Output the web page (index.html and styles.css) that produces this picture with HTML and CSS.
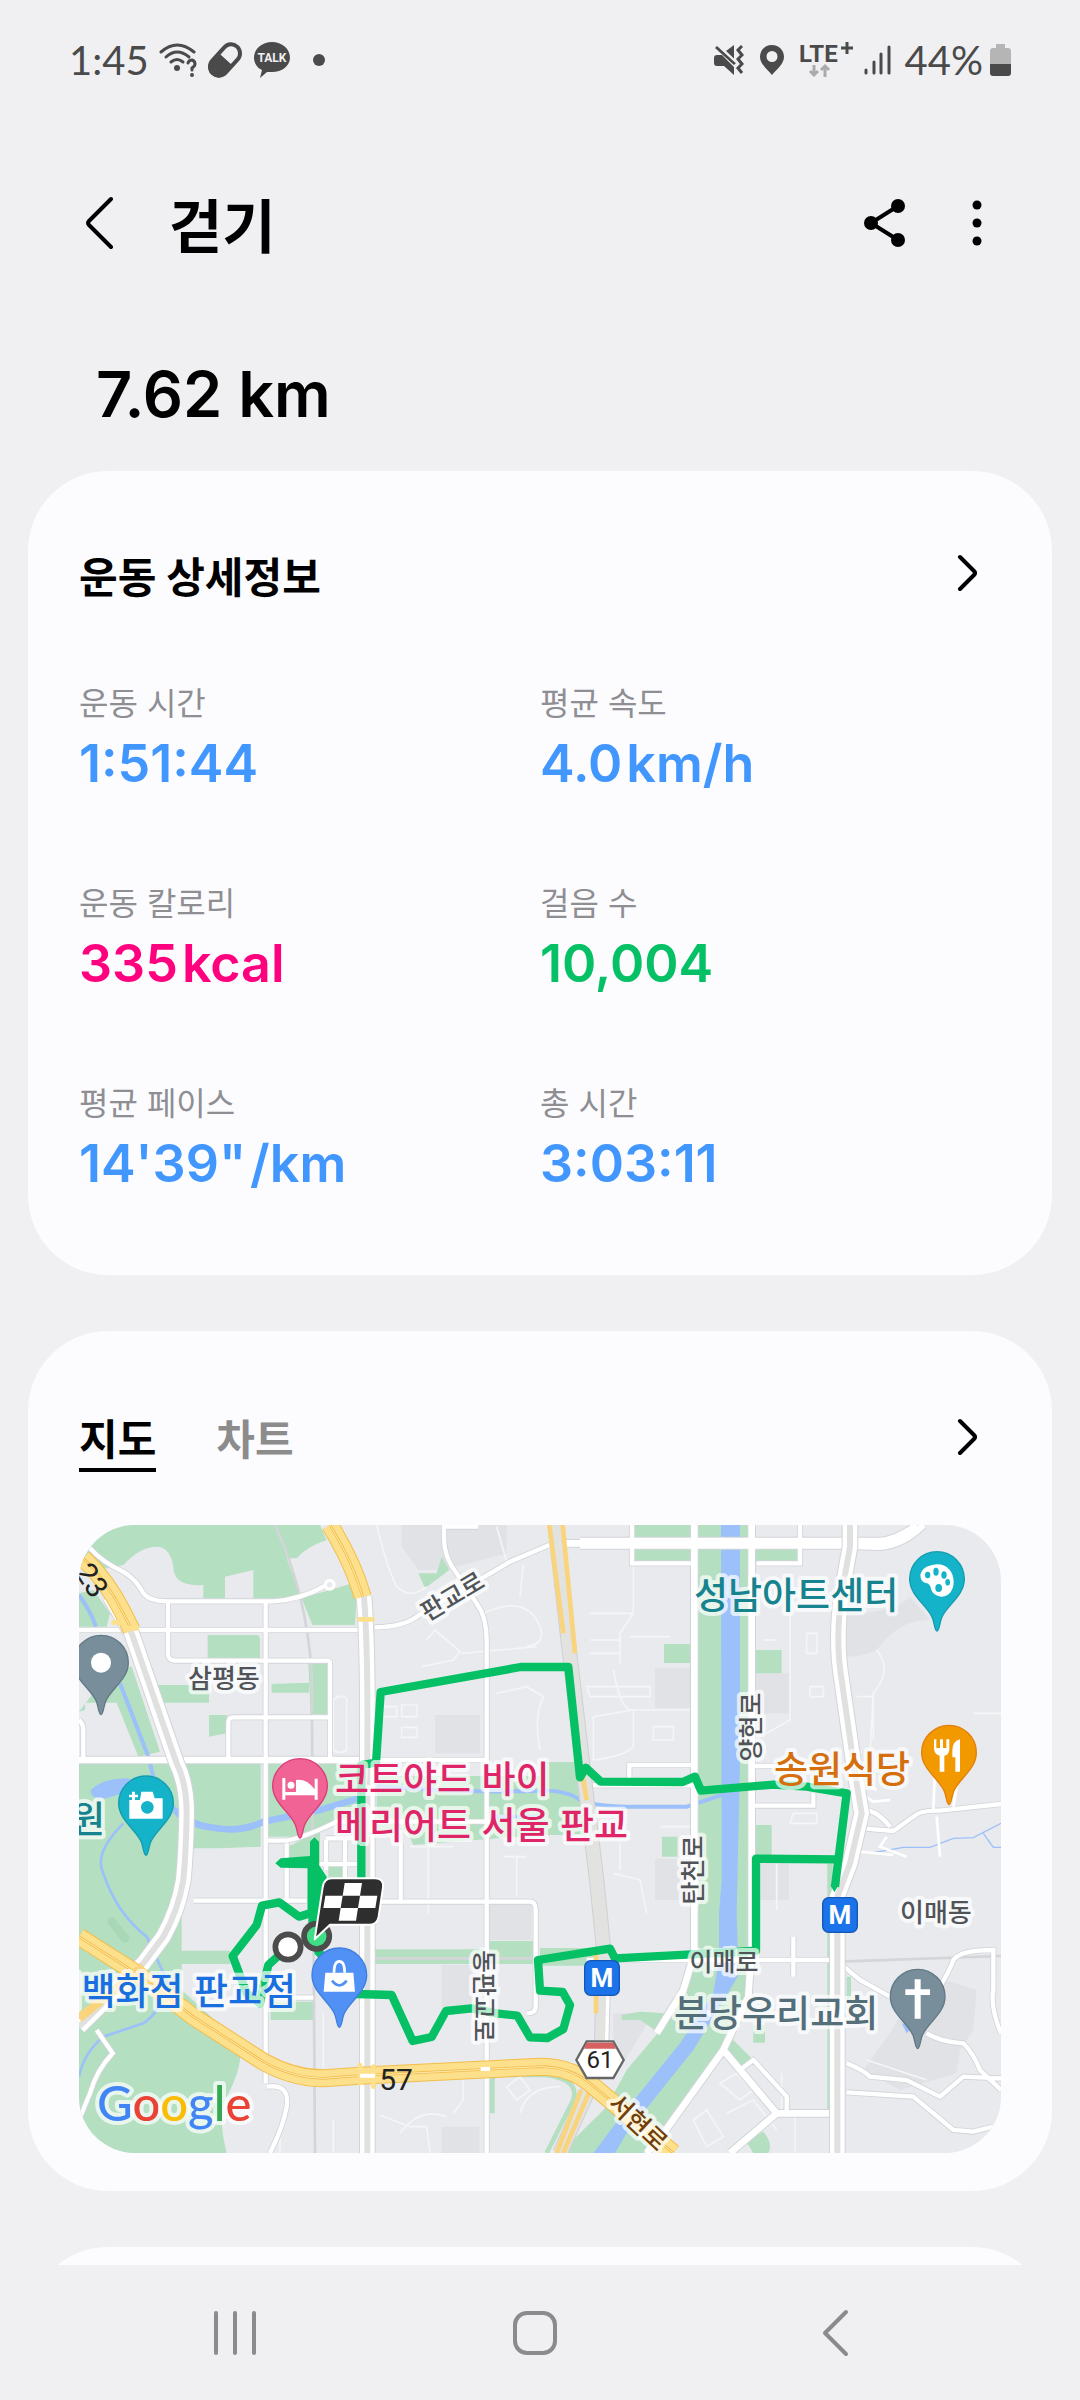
FILE: index.html
```html
<!DOCTYPE html>
<html lang="ko">
<head>
  <meta charset="UTF-8">
  <meta name="viewport" content="width=device-width, initial-scale=1.0">
  <title>걷기</title>
  <link rel="stylesheet" href="styles.css">
</head>
<body>
  <div class="statusbar">
    <div class="status-left">
      <span class="clock">1:45</span>
      <svg class="icon" width="38" height="36" viewBox="0 0 38 36">
        <g fill="none" stroke="#4a4a4a" stroke-width="3" stroke-linecap="round">
          <path d="M2 10Q18 -4 35 10"/>
          <path d="M7 15Q18 5 30 15"/>
          <path d="M12 20Q18 15 24 20"/>
          <path d="M29 21Q30 18 33 18Q36 19 36 22Q36 24 33 26V28"/>
        </g>
        <circle cx="18" cy="26" r="3" fill="#4a4a4a"/>
        <circle cx="33" cy="33" r="2" fill="#4a4a4a"/>
      </svg>
      <svg class="icon" width="36" height="36" viewBox="0 0 36 36">
        <g transform="rotate(42 18 18)">
          <rect x="9" y="0" width="18" height="36" rx="9" fill="none" stroke="#4a4a4a" stroke-width="4"/>
          <path d="M8 17H28V28A10 10 0 0 1 8 28Z" fill="#4a4a4a"/>
        </g>
      </svg>
      <svg class="icon" width="38" height="36" viewBox="0 0 38 36">
        <path d="M19 0C29 0 37 7 37 15.500S29 30 19 30L14 30L7 36L9 28C4 26 1 21 1 15.500C1 7 9 0 19 0Z" fill="#4a4a4a"/>
        <text class="talk" x="19" y="20">TALK</text>
      </svg>
      <span class="dot"></span>
    </div>
    <div class="status-right">
      <svg class="icon" width="30" height="32" viewBox="0 0 30 32">
        <path d="M3 11H8L20 23V31L10 22H3Q0 22 0 19V14Q0 11 3 11ZM12 7L20 1V15Z" fill="#4a4a4a"/>
        <path d="M2 3L21 20" stroke="#4a4a4a" stroke-width="3"/>
        <path d="M7 4L22 18" stroke="#f0f0f3" stroke-width="2"/>
        <path d="M28 2L24 6L28 11L24 15L28 20L24 24L28 29" fill="none" stroke="#4a4a4a" stroke-width="3"/>
      </svg>
      <svg class="icon" width="24" height="32" viewBox="0 0 24 32">
        <path fill-rule="evenodd" d="M12 1C19 1 24 6 24 13C24 20 16 26 12 31C8 26 0 20 0 13C0 6 5 1 12 1ZM12 7A5 5 0 1 0 12 18A5 5 0 1 0 12 7Z" fill="#4a4a4a"/>
      </svg>
      <svg class="icon lte-icon" width="54" height="38" viewBox="0 0 54 38">
        <text class="lte" x="-1" y="21">LTE</text>
        <path d="M47 1V13M41 7H53" stroke="#4a4a4a" stroke-width="3"/>
        <path d="M14 24V35M10 30L14 34L18 30M25 36V25M21 29L25 25L29 29" fill="none" stroke="#aaa" stroke-width="3"/>
      </svg>
      <svg class="icon" width="27" height="32" viewBox="0 0 27 32">
        <path d="M2 26V29M10 18V29M17 10V29M25 3V29" fill="none" stroke="#4a4a4a" stroke-width="3" stroke-linecap="round"/>
      </svg>
      <span class="battery-text">44%</span>
      <svg class="icon" width="21" height="32" viewBox="0 0 21 32">
        <path d="M6 0H15V4H18Q21 4 21 7V20H0V7Q0 4 3 4H6Z" fill="#b5b5b5"/>
        <path d="M0 20H21V29Q21 32 18 32H3Q0 32 0 29Z" fill="#4a4a4a"/>
      </svg>
    </div>
  </div>

  <main class="content">
    <header class="appbar">
      <button class="icon-btn back" type="button" aria-label="뒤로">
        <svg width="28" height="54" viewBox="0 0 28 54"><path d="M26 3L4 25Q2 27 4 29L26 51" fill="none" stroke="#000" stroke-width="4" stroke-linecap="round"/></svg>
      </button>
      <h1>걷기</h1>
      <button class="icon-btn share" type="button" aria-label="공유">
        <svg width="42" height="50" viewBox="0 0 42 50"><path d="M34 8L7 25L34 42" fill="none" stroke="#000" stroke-width="4"/><circle cx="34" cy="8" r="7"/><circle cx="7" cy="25" r="7"/><circle cx="34" cy="42" r="7"/></svg>
      </button>
      <button class="icon-btn more" type="button" aria-label="더보기">
        <svg width="10" height="48" viewBox="0 0 10 48"><circle cx="5" cy="6" r="4.500"/><circle cx="5" cy="24" r="4.500"/><circle cx="5" cy="42" r="4.500"/></svg>
      </button>
    </header>

    <p class="distance">7.62 km</p>

    <section class="card details">
      <div class="card-head">
        <h2>운동 상세정보</h2>
        <a class="chevron" href="#details" aria-label="운동 상세정보 보기">
          <svg width="20" height="38" viewBox="0 0 20 38"><path d="M3 3L17 17Q19 19 17 21L3 35" fill="none" stroke="#000" stroke-width="4" stroke-linecap="round"/></svg>
        </a>
      </div>
      <dl class="stats">
        <div><dt>운동 시간</dt><dd class="blue">1:51:44</dd></div>
        <div><dt>평균 속도</dt><dd class="blue">4.0<span class="unit">km/h</span></dd></div>
        <div><dt>운동 칼로리</dt><dd class="pink">335<span class="unit">kcal</span></dd></div>
        <div><dt>걸음 수</dt><dd class="green">10,004</dd></div>
        <div><dt>평균 페이스</dt><dd class="blue">14'39"<span class="unit">/km</span></dd></div>
        <div><dt>총 시간</dt><dd class="blue">3:03:11</dd></div>
      </dl>
    </section>

    <section class="card map-card">
      <div class="card-head">
        <div class="tabs">
          <button class="tab active" type="button">지도</button>
          <button class="tab" type="button">차트</button>
        </div>
        <a class="chevron" href="#map" aria-label="지도 보기">
          <svg width="20" height="38" viewBox="0 0 20 38"><path d="M3 3L17 17Q19 19 17 21L3 35" fill="none" stroke="#000" stroke-width="4" stroke-linecap="round"/></svg>
        </a>
      </div>

      <div class="map">
        <svg class="map-art" viewBox="57 435 2766 1884">
          <defs>
            <path id="pin" d="M0 156C-7 156-8 130-14 116C-30 78-82 50-82 0A82 82 0 0 1 82 0C82 50 30 78 14 116C8 130 7 156 0 156Z"/>
            <path id="wide" d="M1903 435V1720L1870 1830L1790 1960M2075 435V1700L2065 1850L1990 2010L1810 2260L1760 2319M1990 2010L2150 2200L2010 2319M2150 2200H2320M57 1140H920M1500 490H1560M1560 483H2340L2460 483Q2510 480 2570 435M1560 496H2340L2460 500Q2530 495 2590 435"/>
            <path id="narrow" d="M85 500Q130 550 190 575Q230 600 250 640Q270 664 320 664H640Q720 660 800 615M57 750H895M324 664V820Q324 842 345 842H810M617 664V2110M810 842V1140M505 1140V1030Q505 1012 520 1012H810M945 742Q1030 740 1070 710L1350 545L1475 492M1152 435V470Q1150 530 1190 580L1250 670Q1280 710 1280 780V2319M950 1140H1280M1150 440H1255M57 1020Q70 1030 70 1050V1140M400 1562H740M617 1382H680Q740 1370 830 1325H1290M680 1390V1562M798 1380V1470M855 1380V1530M780 1452H895M798 1375H880M1022 1390V1565M940 1565H1410Q1427 1565 1427 1590V1880Q1427 1900 1400 1900M620 1853H760M110 1950L158 2020Q110 2070 90 2140L57 2220M1580 1740H2310M2200 1670V1790M2080 1277H2260V1240M2080 1158H2330M1708 1220V1155H1900M2220 435V550H2090M1716 435V550H1895M1585 1216H1900M2380 1343L2500 1353L2560 1310Q2580 1290 2640 1292L2823 1272M2410 1290Q2450 1290 2490 1340M2340 1750L2400 1800L2490 1850M2600 1960Q2640 1985 2710 1990Q2740 2020 2760 2070L2823 2130M2360 2137L2560 2150L2680 2250L2740 2255L2800 2240M2360 2050Q2410 2070 2430 2090L2540 2100L2640 2150L2710 2090L2823 2095M2640 1820Q2670 1770 2680 1740Q2700 1710 2800 1710V1830Q2790 1880 2823 1960M2040 2070L2080 2040L2180 2150V2190M620 2120Q690 2110 680 2180Q670 2240 630 2319"/>
            <path id="highway" d="M150 650L215 760L350 1150Q380 1210 380 1300Q378 1420 370 1500Q355 1590 310 1670L250 1750L57 1940M912 650Q924 800 922 1100V2319M2370 435V500L2345 640Q2325 780 2345 900L2385 1180L2405 1300L2370 1450L2332 1550V2319"/>
            <path id="trunk" d="M57 1670L230 1780L400 1910L610 2045Q700 2095 790 2095L900 2087L1440 2060Q1530 2060 1590 2110L1840 2319M810 435Q880 550 908 650M70 535Q140 600 190 700L215 750"/>
          </defs>

          <rect x="57" y="435" width="2766" height="1884" fill="#e8eaed"/>

          <!-- blocks -->
          <path fill="#e1e2e6" d="M1025 435H1340V520L1150 570H1075L1025 500ZM1125 1005H1260V1120H1125ZM1785 863H1890V983H1785ZM2088 880H2190V1000H2088ZM1785 1437H1887V1560H1785ZM2100 1450H2187V1560H2100ZM2360 700Q2500 700 2550 650L2610 720Q2520 715 2450 810Q2410 830 2360 830ZM2490 1960L2590 1780L2750 1830L2740 1950L2700 2010L2690 2080L2520 2130L2410 2070ZM1285 1570H1415V1680H1285ZM1145 1755H1240V1880H1145ZM1660 1900H1780L1690 2050H1660ZM1145 2240H1258V2319H1145Z"/>

          <!-- parks -->
          <g fill="#b4dfc1">
            <path d="M57 435H780L800 480Q740 500 710 535H680L725 655H580V570L495 590V655H430V615Q340 620 340 560Q330 500 290 500Q240 500 190 555L110 570L57 520Z"/>
            <path d="M725 655L870 612L890 650L885 735H757ZM443 765H590Q600 765 600 780V835H443ZM270 915H447V968H280ZM635 912L747 908V938H635ZM745 850H803V1002H752ZM447 1005H500V1060L447 1070ZM1075 580H1130L1145 530L1168 570L1095 625Z"/>
            <path d="M57 640L100 630L150 700L140 740H57ZM160 860H215L300 1115L235 1130L170 968H75V990L57 995Z"/>
            <path d="M57 1150H602V1400L480 1405H395L365 1500V1712H510V1752H365V1830L540 1990Q550 2060 500 2150Q470 2200 500 2319H57Z"/>
            <path d="M625 1150H895V1300L700 1370H625ZM950 1188H1440V1146H1570V1365H1440L1060 1395L1040 1350H950ZM945 1708H1285V1683H1420V1752H945ZM632 1865H765V1920H632ZM805 1460H850V1500H805ZM685 1400L780 1350V1450H685Z"/>
            <path d="M1915 435H2065V1700L2060 1850L1990 2000L1830 2210L1750 2319H1500L1640 2180L1700 2070L1810 1940L1880 1810L1915 1700Z"/>
            <path d="M1722 435H1890V472H1722ZM1722 508H1890V545H1722ZM2088 508H2220V545H2088ZM1812 792H1890V849H1812ZM2087 810H2165V880H2087ZM1806 1370H1852V1430H1806ZM2085 1335H2135V1425H2085ZM2302 1450H2318V2190H2302ZM2020 1980L2080 2040L2045 2065L1990 2010ZM2080 1935H2115V1988H2080ZM2360 1790H2373V1870H2360ZM1685 1905L1740 1895L1815 1900L1785 1950L1740 1920H1685ZM2055 2280L2110 2255Q2140 2290 2125 2319H2080ZM1440 1704H1600V1757H1440Z"/>
          </g>
          <path fill="none" stroke="#b4dfc1" stroke-width="14" d="M1297 2200V2100Q1297 2085 1320 2085H1460Q1560 2100 1540 2160L1460 2319"/>
          <path d="M155 1625L195 1675" stroke="#a8d8b5" stroke-width="26" stroke-linecap="round"/>

          <!-- water -->
          <path fill="#9cc0f9" d="M1983 435H2040V1150L2030 1600L2033 1700V1790L1900 2010L1700 2260L1665 2319H1600L1690 2200L1860 1990L1960 1840L1977 1740V1600L1985 1500ZM92 1230Q130 1195 200 1195L270 1210Q220 1230 140 1255Q90 1260 92 1230ZM2525 1930L2560 1940L2540 1960Z"/>
          <g fill="none" stroke="#9cc0f9">
            <path stroke-width="20" d="M345 1290Q380 1330 450 1342Q540 1360 610 1325L780 1290L895 1255"/>
            <path stroke-width="12" d="M57 645Q90 690 108 740M180 910L265 1130L280 1190L345 1290M950 1218Q1200 1240 1440 1232Q1520 1230 1560 1260Q1600 1278 1700 1280H1880L2000 1240M1290 1310H1440"/>
            <path stroke-width="8" d="M190 1330Q100 1420 130 1480Q170 1600 260 1670L320 1800Q310 1890 250 1930L130 1970Q70 2020 57 2090"/>
            <path stroke-width="4" d="M2440 1418L2530 1402H2610L2680 1375L2740 1373L2823 1330M2770 1360L2800 1402H2823"/>
          </g>

          <!-- small streets -->
          <path fill="none" stroke="#f4f5f6" stroke-width="5" d="M950 435Q980 560 1010 620Q1050 660 1100 620M1270 700Q1400 640 1440 740Q1460 790 1400 800M1205 820L1430 800M1100 780L1125 750L1200 815L1180 840L1085 860M1340 545L1310 440M1390 555L1380 650M820 1110V960Q840 940 860 955V1110Q840 1125 820 1110M970 980H1010V1010H970ZM1025 975H1070V1010H1025ZM1025 1042H1070V1072H1025ZM1310 940L1400 920L1450 950Q1420 1010 1440 1110M1050 1400H1180M1105 1400V1600M1330 1430H1400M1370 1430V1550M1590 700H1720M1720 560V700L1680 760V850M1590 780H1680M1590 820H1680M1710 770H1830M1580 920H1770V950H1590ZM1660 870Q1680 980 1710 990H1890M1600 1080V1010L1720 990V1100Q1690 1130 1600 1140ZM1780 1040H1840V1080H1780ZM2190 700V1020L2120 1060M2110 780H2150M2240 760H2270V820H2240ZM2250 920H2290V950H2250ZM2390 950H2440V1080M2450 810Q2500 870 2440 940L2430 1120M2740 1000H2823M2190 1330H2270V1300H2200ZM2150 1450V1590M1660 1480L1740 1500L1760 1600M1680 1390V1470M1800 1340H1890M2000 2200L2080 2160L2150 2250M1900 2220L1940 2190L1990 2270L1940 2300ZM1980 2110L2030 2080L2080 2130L2040 2160ZM2165 2080V2200M2205 2200V2319M1180 2200L1210 2160V2070M1020 2260Q1080 2180 1160 2210M1340 2120L1380 2090L1410 2130L1370 2160ZM1380 2200Q1400 2120 1500 2120M960 2206L1050 2240H1100L1110 2319M660 2240V2319M820 2220V2319M2420 2040L2600 2100M790 1900V2060"/>

          <!-- rail -->
          <path fill="none" stroke="#d3d5d8" stroke-width="8" d="M645 435Q740 640 755 880L765 2319M940 1735H1420M2340 1745L2823 1728"/>

          <use href="#narrow" fill="none" stroke="#d2d4d9" stroke-width="18"/>
          <use href="#wide" fill="none" stroke="#d2d4d9" stroke-width="26"/>
          <use href="#narrow" fill="none" stroke="#fff" stroke-width="13"/>
          <use href="#wide" fill="none" stroke="#fff" stroke-width="20"/>
          <circle cx="809" cy="614" r="13" fill="#e8eaed" stroke="#fff" stroke-width="10"/>
          <path fill="none" stroke="#fff" stroke-width="8" d="M2400 1240L2440 1265L2490 1260M2360 1180L2450 1230M2600 1100L2625 1170L2620 1290M2630 1310L2640 1430M2710 1100L2680 1280M2480 1370L2460 1400L2540 1430M2400 1415L2500 1425"/>
          <use href="#highway" fill="none" stroke="#d2d4d9" stroke-width="50"/>
          <use href="#highway" fill="none" stroke="#fff" stroke-width="44"/>
          <use href="#highway" fill="none" stroke="#e0e0e0" stroke-width="18"/>

          <!-- road 61 -->
          <path fill="none" stroke="#cfd0d2" stroke-width="46" d="M1485 435L1522 760L1570 1170L1610 1500L1632 1720L1625 1980L1590 2120L1500 2319"/>
          <path fill="none" stroke="#e2e2e1" stroke-width="40" d="M1485 435L1522 760L1570 1170L1610 1500L1632 1720L1625 1980L1590 2120L1500 2319"/>
          <path fill="none" stroke="#fff" stroke-width="10" d="M1646 1760L1640 1980L1605 2110"/>
          <path fill="none" stroke="#f9d47c" stroke-width="14" d="M1468 435L1510 760M1508 435L1545 820M1565 1170L1580 1260M1608 1720V1900M1590 2130L1510 2319M1563 2130L1490 2319"/>

          <use href="#trunk" fill="none" stroke="#f3bd4b" stroke-width="54"/>
          <use href="#trunk" fill="none" stroke="#fde08c" stroke-width="48"/>
          <use href="#trunk" fill="none" stroke="#f3bd4b" stroke-width="8"/>
          <use href="#trunk" fill="none" stroke="#fdebb4" stroke-width="3"/>
          <path fill="none" stroke="#f9d47c" stroke-width="26" d="M57 1915L250 1760"/>
          <path fill="none" stroke="#fde08c" stroke-width="14" stroke-linecap="round" d="M160 728H180M205 745H230M898 718H938M900 2055V2110M940 2060V2120"/>
          <path fill="none" stroke="#fff" stroke-width="12" d="M900 2087H945M1262 2067H1290"/>

          <!-- walked route -->
          <g fill="none" stroke="#05c065" stroke-width="25" stroke-linejoin="round">
            <path d="M904 1500V1155L948 1148L962 936L1382 861H1525L1560 1192L1577 1163L1622 1205L1868 1206L1905 1190L1923 1232L2140 1214L2240 1220L2360 1240L2325 1520"/>
            <path d="M2333 1438L2088 1436V1712L1895 1723L1665 1735L1650 1706L1434 1740L1440 1832L1508 1836L1530 1875L1510 1947L1462 1974L1410 1972L1372 1907L1310 1900L1235 1885L1158 1893L1115 1971L1058 1983L995 1845L890 1842L775 1715L760 1650"/>
            <path d="M684 1701L625 1755L612 1810L600 1870L560 1840L518 1728L590 1635L606 1577L658 1567L717 1610L755 1598V1460"/>
          </g>
          <path fill="#05c065" d="M750 1385L763 1372L777 1385V1455L800 1490L785 1650H745V1465L662 1463L646 1450L662 1435L750 1428ZM2311 1515H2336L2323 1537Z"/>

          <circle cx="770" cy="1669" r="38" fill="#40dd87" stroke="#4c4c4c" stroke-width="17"/>
          <circle cx="684" cy="1701" r="38" fill="#fff" stroke="#4c4c4c" stroke-width="17"/>

          <!-- finish flag -->
          <path d="M815 1495H945Q972 1495 969 1522L956 1610Q951 1634 930 1634H810L764 1678L788 1522Q792 1495 815 1495Z" fill="#2e2e2e" stroke="#fff" stroke-width="6" stroke-linejoin="round"/>
          <path fill="#fff" d="M854 1509H906L900 1547H952L946 1584H894L888 1622H836L842 1584H790L796 1547H848Z"/>
          <path fill="#2e2e2e" d="M848 1547H900L894 1584H842Z"/>

          <!-- pins -->
          <g transform="translate(123 848)"><use href="#pin" fill="#788f9b" stroke="#627985" stroke-width="4"/><circle r="30" fill="#fff"/></g>
          <g transform="translate(258 1270)"><use href="#pin" fill="#15b3c9" stroke="#129daf" stroke-width="4"/><path fill="#fff" d="M-50 -10H-18L-14 -35H20L26 -15H50V46H-50ZM-42 -35H-33V-26H-24V-18H-33V-9H-42V-18H-51V-26H-42Z"/><circle cx="4" cy="12" r="19" fill="#15b3c9"/></g>
          <g transform="translate(720 1218)"><use href="#pin" fill="#f16394" stroke="#db3d77" stroke-width="4"/><path fill="#fff" d="M-53 -24H-44V18H-12V-18Q20 -22 44 10V-22H53V41H44V28H-44V41H-53Z"/><circle cx="-27" cy="-2" r="13" fill="#fff" stroke="#f16394" stroke-width="5"/></g>
          <g transform="translate(838 1786)"><use href="#pin" fill="#5190f4" stroke="#407fdf" stroke-width="4"/><path fill="#fff" d="M-42 -8H42L47 49H-47Z"/><path d="M-16 -8Q-16 -42 0 -42Q16 -42 16 -8" fill="none" stroke="#fff" stroke-width="8"/><path d="M-22 16Q0 44 22 16" fill="none" stroke="#5190f4" stroke-width="8"/></g>
          <g transform="translate(2631 597)"><use href="#pin" fill="#15b3c9" stroke="#129daf" stroke-width="4"/><path fill="#fff" d="M0 -44C30 -44 50 -22 50 8C50 35 34 53 12 53Q-12 50 -18 30Q-20 14 -34 12Q-50 8 -50 -12Q-44 -40 0 -44Z"/><g fill="#15b3c9"><ellipse cx="-28" cy="-12" rx="8" ry="10"/><ellipse cx="-3" cy="-22" rx="8" ry="12"/><ellipse cx="21" cy="-12" rx="8" ry="11"/><ellipse cx="32" cy="10" rx="7" ry="10"/><ellipse cx="5" cy="27" rx="10" ry="12"/></g></g>
          <g transform="translate(2667 1118)"><use href="#pin" fill="#f29900" stroke="#e37f0a" stroke-width="4"/><path fill="#fff" d="M-45 -40H-38V-14H-27V-40H-18V-14H-8V-40H1V-12Q1 6 -14 9V57H-28V9Q-44 4 -45 -12ZM33 -40V57H19V14H10V-8Q12 -36 33 -40Z"/></g>
          <g transform="translate(2573 1850)"><use href="#pin" fill="#788f9b" stroke="#627985" stroke-width="4"/><path fill="#fff" d="M-9 -52H9V-22H37V-5H9V66H-9V-5H-37V-22H-9Z"/></g>

          <!-- metro stops and route shield -->
          <rect x="2288" y="1553" width="104" height="104" rx="18" fill="#1a73e8" stroke="#1557b8" stroke-width="4"/>
          <rect x="1574" y="1742" width="104" height="104" rx="18" fill="#1a73e8" stroke="#1557b8" stroke-width="4"/>
          <path d="M1580 1984H1660L1691 2040L1660 2094H1580L1549 2040Z" fill="#fff" stroke="#666" stroke-width="7"/>
          <path d="M1580 1988H1660L1668 2006H1572Z" fill="#d86060"/>
        </svg>

        <svg class="map-labels" viewBox="0 0 922 628">
          <text class="place teal" x="615" y="84">성남아트센터</text>
          <text class="place teal end" x="26" y="308">원</text>
          <text class="place orange" x="695" y="258">송원식당</text>
          <text class="place rose" x="256" y="268">코트야드 바이</text>
          <text class="place rose" x="256" y="314">메리어트 서울 판교</text>
          <text class="place blue-label end" x="217" y="480">대백화점 판교점</text>
          <text class="place slate" x="595" y="502">분당우리교회</text>
          <text class="area" x="109" y="163">삼평동</text>
          <text class="area" x="821" y="397">이매동</text>
          <text class="street" x="645" y="446">이매로</text>
          <text class="street" transform="translate(378 79) rotate(-31)">판교로</text>
          <text class="street" transform="translate(681 202) rotate(-90)">양현로</text>
          <text class="street" transform="translate(623 345) rotate(-90)">탄천로</text>
          <text class="street" transform="translate(396 471) rotate(90)">동판교로</text>
          <text class="street brown" transform="translate(553 604) rotate(43)">서현로</text>
          <text class="route-no" transform="translate(4 61) rotate(57)">23</text>
          <text class="route-no" x="317" y="565">57</text>
          <text class="shield-no" x="521" y="543">61</text>
          <text class="metro" x="761" y="399">M</text>
          <text class="metro" x="523" y="462">M</text>
          <text class="google" x="18" y="596"><tspan fill="#4285f4">G</tspan><tspan fill="#ea4335">o</tspan><tspan fill="#fbbc05">o</tspan><tspan fill="#4285f4">g</tspan><tspan fill="#34a853">l</tspan><tspan fill="#ea4335">e</tspan></text>
        </svg>
      </div>
    </section>

    <section class="card next-card"></section>
  </main>

  <nav class="navbar">
    <button type="button" aria-label="최근 앱">
      <svg width="44" height="46" viewBox="0 0 44 46"><path d="M3 3V43M22 3V43M41 3V43" fill="none" stroke="#8b8b8b" stroke-width="4" stroke-linecap="round"/></svg>
    </button>
    <button type="button" aria-label="홈">
      <svg width="46" height="46" viewBox="0 0 46 46"><rect x="3" y="3" width="40" height="40" rx="12" fill="none" stroke="#8b8b8b" stroke-width="4"/></svg>
    </button>
    <button type="button" aria-label="뒤로">
      <svg width="28" height="48" viewBox="0 0 28 48"><path d="M25 3L4 24L25 45" fill="none" stroke="#8b8b8b" stroke-width="4" stroke-linecap="round" stroke-linejoin="round"/></svg>
    </button>
  </nav>
</body>
</html>
```
FILE: styles.css
```css
* {
  box-sizing: border-box;
}
body {
  margin: 0;
  height: 100vh;
  display: flex;
  flex-direction: column;
  background: #f0f0f3;
  color: #000;
  font-family: Inter, "Noto Sans CJK KR", sans-serif;
}
h1, h2, p, dl, dd {
  margin: 0;
}
button {
  padding: 0;
  border: 0;
  background: none;
  color: inherit;
  font: inherit;
}
svg {
  display: block;
}

/* status bar */
.statusbar {
  flex: none;
  display: flex;
  justify-content: space-between;
  align-items: center;
  height: 120px;
  padding: 0 69px;
  color: #4a4a4a;
}
.status-left, .status-right {
  display: flex;
  align-items: center;
}
.status-left {
  gap: 10px;
}
.status-right {
  gap: 16px;
}
.clock, .battery-text {
  font-family: Lato, sans-serif;
  font-size: 40px;
  line-height: 48px;
}
.battery-text {
  margin: 0 -9px 0 -2px;
}
.dot {
  width: 12px;
  height: 12px;
  margin-left: 12px;
  border-radius: 50%;
  background: #4a4a4a;
}
.talk {
  font: bold 12px Roboto, sans-serif;
  fill: #f0f0f3;
  text-anchor: middle;
}
.lte {
  font: bold 24px Roboto, sans-serif;
  fill: #4a4a4a;
}
.lte-icon {
  margin-right: -6px;
}

/* scrolling content */
.content {
  flex: 1;
  min-height: 0;
  overflow-y: auto;
  scrollbar-width: none;
}
.appbar {
  display: flex;
  align-items: center;
  height: 206px;
  padding: 0 98px 0 85px;
}
.appbar h1 {
  flex: 1;
  margin-left: 56px;
  font-size: 58px;
  font-weight: 700;
}
.share {
  margin-right: 66px;
}
.distance {
  padding: 29px 96px 38px;
  font-size: 63px;
  line-height: 78px;
  font-weight: 600;
}

.card {
  margin: 0 28px 56px;
  padding: 0 51px;
  border-radius: 80px;
  background: #fcfcff;
}
.card-head {
  display: flex;
  justify-content: space-between;
  align-items: flex-start;
  padding-right: 24px;
}
.chevron {
  margin-top: 7px;
}
.details {
  padding-top: 76px;
  padding-bottom: 75px;
}
.details h2 {
  font-size: 42px;
  line-height: 62px;
  font-weight: 700;
}
.stats {
  display: grid;
  grid-template-columns: 1fr 1fr;
  row-gap: 80px;
  margin-top: 71px;
}
.stats dt {
  color: #8e8e93;
  font-size: 32px;
  line-height: 48px;
}
.stats dd {
  font-size: 52px;
  line-height: 72px;
  font-weight: 600;
}
.unit {
  margin-left: 4px;
}
.blue {
  color: #4297ff;
}
.pink {
  color: #ff007f;
}
.green {
  color: #05c065;
}

/* map card */
.map-card {
  padding-top: 80px;
  padding-bottom: 38px;
}
.tabs {
  display: flex;
  gap: 60px;
}
.tab {
  border-bottom: 4px solid transparent;
  color: #8c8c8c;
  font-size: 42px;
  line-height: 57px;
  font-weight: 700;
}
.tab.active {
  border-color: #000;
  color: #000;
}
.map {
  position: relative;
  margin-top: 53px;
  border-radius: 56px;
  overflow: hidden;
}
.map-art {
  width: 100%;
}
.map-labels {
  position: absolute;
  inset: 0;
  width: 100%;
}
.map-labels text {
  font-family: "Noto Sans CJK KR", sans-serif;
  font-weight: 500;
  paint-order: stroke;
  stroke: rgba(255, 255, 255, 0.7);
  stroke-width: 8px;
  stroke-linejoin: round;
}
.map-labels .place {
  font-size: 37px;
}
.map-labels .area {
  font-size: 26px;
  fill: #505458;
}
.map-labels .street {
  font-size: 25px;
  fill: #505458;
  text-anchor: middle;
}
.map-labels .end {
  text-anchor: end;
}
.map-labels .teal {
  fill: #16838e;
}
.map-labels .orange {
  fill: #d56e0c;
}
.map-labels .rose {
  fill: #df2568;
}
.map-labels .blue-label {
  fill: #1a6fe0;
}
.map-labels .slate {
  fill: #546e7a;
}
.map-labels .brown {
  fill: #6f3f0a;
}
.map-labels .route-no, .map-labels .shield-no, .map-labels .metro {
  font-family: Roboto, sans-serif;
  font-weight: 400;
  text-anchor: middle;
  stroke: none;
  fill: #222;
}
.map-labels .route-no {
  font-size: 30px;
}
.map-labels .shield-no {
  font-size: 24px;
}
.map-labels .metro {
  font-size: 26px;
  font-weight: 700;
  fill: #fff;
}
.map-labels .google {
  font-family: Lato, sans-serif;
  font-size: 49px;
}
.next-card {
  height: 400px;
}

/* system navigation */
.navbar {
  flex: none;
  display: flex;
  justify-content: center;
  height: 135px;
  padding-right: 10px;
}
.navbar button {
  width: 28%;
  display: flex;
  justify-content: center;
  align-items: center;
}
```
